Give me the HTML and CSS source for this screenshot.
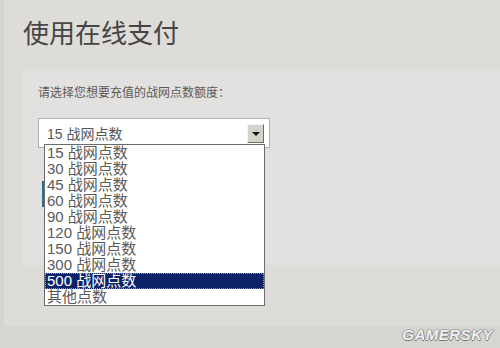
FILE: index.html
```html
<!DOCTYPE html>
<html lang="zh-CN">
<head>
<meta charset="UTF-8" />
<meta name="viewport" content="width=device-width, initial-scale=1" />
<title>使用在线支付</title>
<link rel="stylesheet" href="styles.css">
</head>
<body>

<div class="page">
<h1>使用在线支付</h1>

<div class="panel">
<p class="label">请选择您想要充值的战网点数额度：</p>

<div class="select">
<span class="select-value">15 战网点数</span>
<span class="select-btn"></span>

<ul class="options">
<li>15 战网点数</li>
<li>30 战网点数</li>
<li>45 战网点数</li>
<li>60 战网点数</li>
<li>90 战网点数</li>
<li>120 战网点数</li>
<li>150 战网点数</li>
<li>300 战网点数</li>
<li class="active">500 战网点数</li>
<li>其他点数</li>
</ul>
</div>

<button class="pay-btn" aria-label="继续"></button>
</div>
</div>

<div class="watermark">GAMERSKY</div>

</body>
</html>
```

FILE: styles.css
```css
body {
  margin: 0;
  background: #d7d5d1;
  font-family: "Liberation Sans", "Noto Sans CJK SC", sans-serif;
  color: #444;
  height: 348px;
  overflow: hidden;
  position: relative;
}
.page {
  margin-left: 4px;
  height: 326px;
  background: #dedcd9;
  padding: 14px 0 0 19px;
  box-sizing: border-box;
}
h1 {
  margin: 0;
  font-size: 26px;
  font-weight: normal;
  line-height: 40px;
  color: #454545;
}
.panel {
  margin-top: 17px;
  height: 194px;
  background: #e3e1df;
  padding: 0 15px;
  box-sizing: border-box;
}
.label {
  margin: 0;
  padding-top: 14px;
  font-size: 12px;
  line-height: 16px;
  color: #5a5a5a;
}
.select {
  position: relative;
  margin-top: 17px;
  width: 232px;
  height: 30px;
  background: #fff;
  border: 1px solid #a8b2b8;
  box-sizing: border-box;
}
.select-value {
  display: block;
  padding: 7px 0 0 8px;
  font-size: 14px;
  line-height: 16px;
  color: #555;
}
.select-btn {
  position: absolute;
  top: 5px;
  right: 5px;
  width: 17px;
  height: 19px;
  background: #d6d3cc;
  border: 1px solid;
  border-color: #f4f3f0 #6f6d68 #6f6d68 #f4f3f0;
  box-sizing: border-box;
}
.select-btn::after {
  content: "";
  position: absolute;
  left: 4px;
  top: 7px;
  border-left: 4px solid transparent;
  border-right: 4px solid transparent;
  border-top: 4px solid #111;
}
.options {
  position: absolute;
  top: 25px;
  left: 5px;
  width: 219px;
  margin: 0;
  padding: 0;
  list-style: none;
  background: #fff;
  border: 1px solid #6b6b6b;
  z-index: 10;
}
.options li {
  height: 16px;
  line-height: 16px;
  padding-left: 2px;
  font-size: 15px;
  color: #5a5a5a;
}
.options li.active {
  background: #0c2369;
  color: #fff;
  outline: 1px dotted #8d9bc4;
  outline-offset: -1px;
}
.pay-btn {
  display: block;
  margin: 33px 0 0 4px;
  width: 110px;
  height: 26px;
  border: none;
  background: #2b6a91;
}
.watermark {
  position: absolute;
  right: 7px;
  bottom: 5px;
  font-size: 15px;
  font-weight: bold;
  font-style: italic;
  letter-spacing: 0.5px;
  color: #efefef;
  text-shadow: 1px 0 0 #8a8a8a, -1px 0 0 #9a9a9a, 0 1px 0 #777, 0 -1px 0 #aaa;
}
```
